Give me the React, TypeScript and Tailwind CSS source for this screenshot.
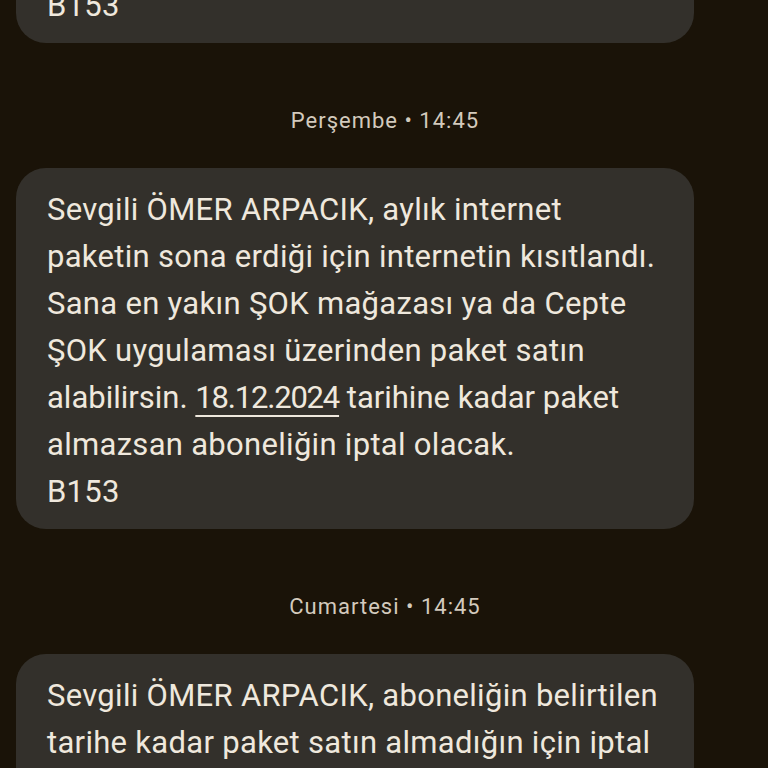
const lines1 = [
  'Sevgili ÖMER ARPACIK, aylık internet',
  'paketin sona erdiği için internetin kısıtlandı.',
  'Sana en yakın ŞOK mağazası ya da Cepte',
  'ŞOK uygulaması üzerinden paket satın',
]

function Bubble({ children, className = '' }: { children: React.ReactNode; className?: string }) {
  return (
    <div
      className={`ml-4 w-[678px] rounded-[30px] bg-[#33302b] pl-[31px] pr-4 pt-[18px] pb-[14px] text-[31px] leading-[47px] tracking-[0.3px] text-[#efe8dd] whitespace-nowrap ${className}`}
    >
      {children}
    </div>
  )
}

function FirstMessage() {
  return (
    <>
      {lines1.map((l) => (
        <div key={l}>{l}</div>
      ))}
      <div className="tracking-[0px]">
        alabilirsin.{' '}
        <span className="underline decoration-2 underline-offset-[7px] tracking-[-1.2px]">18.12.2024</span> tarihine kadar paket
      </div>
      <div>almazsan aboneliğin iptal olacak.</div>
      <div>B153</div>
    </>
  )
}

function Stamp({ text }: { text: string }) {
  return (
    <div className="pt-[64px] pb-[33px] text-center text-[22px] leading-[28px] tracking-[1px] text-[#d3cabd] pl-[2px]">
      {text}
    </div>
  )
}

export default function App() {
  return (
    <div
      className="h-[768px] w-[768px] overflow-hidden bg-[#1a1308]"
      style={{ fontFamily: 'Roboto, "Noto Sans", sans-serif' }}
    >
      <Bubble className="mt-[-318px]">
        <FirstMessage />
      </Bubble>
      <Stamp text="Perşembe • 14:45" />
      <Bubble>
        <FirstMessage />
      </Bubble>
      <Stamp text="Cumartesi • 14:45" />
      <Bubble>
        <div>Sevgili ÖMER ARPACIK, aboneliğin belirtilen</div>
        <div>tarihe kadar paket satın almadığın için iptal</div>
        <div>edildi. Yeni bir hat almak için ŞOK</div>
        <div>mağazalarını ziyaret edebilirsin.</div>
        <div>B153</div>
      </Bubble>
    </div>
  )
}
